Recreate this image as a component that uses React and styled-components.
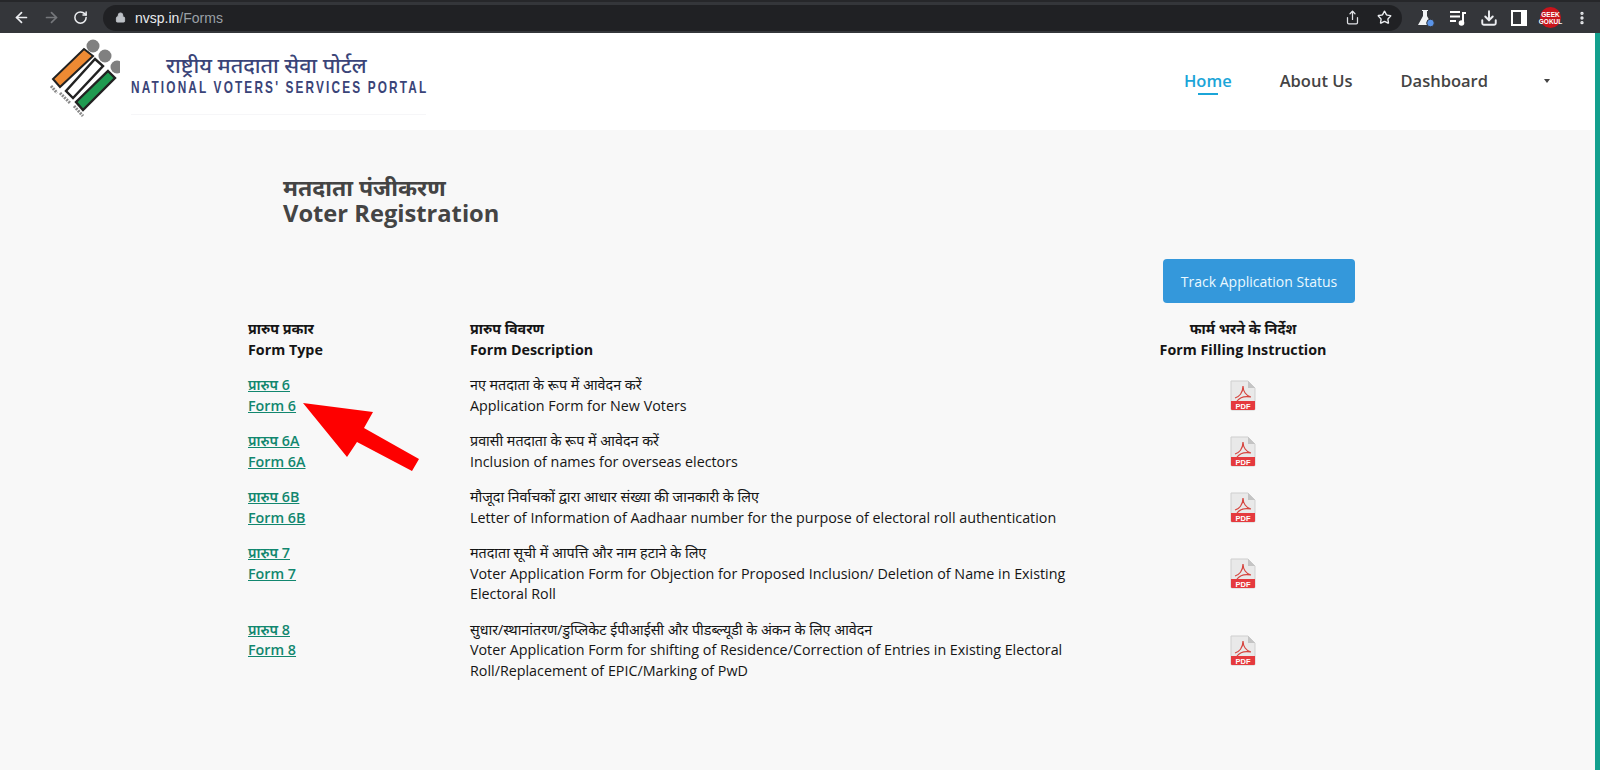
import React from 'react'
import styled, { createGlobalStyle } from 'styled-components'
import { ArrowLeft, ArrowRight, RotateCw, Lock, Share, Star, Download, MoreVertical } from 'lucide-react'

const Global = createGlobalStyle`
    html, body {
        margin: 0;
        padding: 0;
        background: #f8f8f8;
    }
    body {
        font-family: "Open Sans", "Noto Sans", sans-serif;
        color: #151515;
    }
`

const Page = styled.div`
    position: relative;
    width: 1600px;
    height: 770px;
    overflow: hidden;
    display: flex;
    flex-direction: column;
    background: #f8f8f8;
`

const Chrome = styled.div`
    height: 33px;
    flex: none;
    display: flex;
    align-items: center;
    padding: 0 13px;
    box-sizing: border-box;
    background: #34363a;
    border-top: 2px solid #26272a;
    color: #eceef1;
`

const NavIcons = styled.div`
    display: flex;
    align-items: center;
    gap: 13px;
    width: 90px;
    flex: none;
`

const UrlBar = styled.div`
    flex: none;
    width: 1299px;
    height: 26px;
    display: flex;
    align-items: center;
    gap: 9px;
    padding: 0 10px 0 12px;
    box-sizing: border-box;
    background: #202124;
    border-radius: 13px;
    font-family: "Liberation Sans", sans-serif;
    font-size: 14px;
    color: #e8eaed;
`

const UrlPath = styled.span`
    color: #9aa0a6;
`

const Spacer = styled.div`
    flex: 1;
`

const ToolIcons = styled.div`
    display: flex;
    align-items: center;
    gap: 13px;
    margin-left: 14px;
`

const Avatar = styled.div`
    width: 21px;
    height: 21px;
    border-radius: 50%;
    background: #c8141c;
    color: #fff;
    font-family: "Liberation Sans", sans-serif;
    font-size: 6.5px;
    font-weight: 700;
    line-height: 7px;
    display: flex;
    align-items: center;
    justify-content: center;
    text-align: center;
`

const Body = styled.div`
    flex: 1;
    display: flex;
    min-height: 0;
`

const Content = styled.div`
    flex: 1;
    display: flex;
    flex-direction: column;
    min-width: 0;
`

const Stripe = styled.div`
    width: 5px;
    flex: none;
    background: #13a08e;
`

const Header = styled.header`
    height: 97px;
    flex: none;
    display: flex;
    align-items: flex-start;
    background: #fff;
    padding: 0 45px 0 48px;
`

const Brand = styled.div`
    display: flex;
    align-items: flex-start;
    margin-top: 5px;
`

const BrandText = styled.div`
    width: 295px;
    margin: 13px 0 0 11px;
    padding-bottom: 17px;
    border-bottom: 1px solid #f6f6f8;
    color: #3a4478;
`

const BrandHindi = styled.div`
    padding-left: 35px;
    font-size: 21.4px;
    line-height: 28px;
    font-weight: 500;
    white-space: nowrap;
`

const BrandEnglish = styled.div`
    font-family: "Liberation Sans", sans-serif;
    font-size: 17px;
    line-height: 18px;
    font-weight: 700;
    letter-spacing: 3.1px;
    white-space: nowrap;
    transform: scaleX(0.695);
    transform-origin: left center;
`

const Nav = styled.nav`
    margin-left: auto;
    display: flex;
    align-items: center;
    gap: 48px;
    height: 97px;
    margin-top: -1px;
`

const NavItem = styled.a`
    position: relative;
    font-size: 16.5px;
    font-weight: 600;
    color: ${p => (p.$active ? '#1ba5d8' : '#444')};
    ${p =>
        p.$active &&
        `&::after {
            content: '';
            position: absolute;
            left: 14px;
            right: 14px;
            bottom: -3px;
            height: 2px;
            background: #1ba5d8;
        }`}
`

const Caret = styled.span`
    width: 0;
    height: 0;
    margin-left: 8px;
    border-left: 3.5px solid transparent;
    border-right: 3.5px solid transparent;
    border-top: 4px solid #444;
`

const Main = styled.main`
    flex: 1;
    padding: 44px 169px 0 248px;
`

const Title = styled.h1`
    margin: 0 0 0 35px;
    font-size: 23.7px;
    line-height: 26px;
    font-weight: 700;
    color: #444;
`

const TitleHindi = styled.span`
    font-size: 23px;
`

const TitleRow = styled.div`
    display: flex;
    justify-content: flex-end;
    margin-top: 33px;
    margin-bottom: 16px;
    padding-right: 71px;
`

const TrackButton = styled.button`
    width: 192px;
    height: 44px;
    border: none;
    border-radius: 4px;
    background: #3498db;
    color: #eaf8ff;
    font-family: inherit;
    font-size: 14px;
`

const Row = styled.div`
    display: grid;
    grid-template-columns: 222px 590px 366px;
    font-size: 14.3px;
    line-height: 20.5px;
    margin-bottom: 15px;
    font-weight: ${p => (p.$head ? 700 : 400)};
`

const FormLink = styled.a`
    display: block;
    width: fit-content;
    color: #12876f;
    font-weight: 600;
    text-decoration: underline;
`

const DescLine = styled.div`
    white-space: nowrap;
`

const Center = styled.div`
    display: flex;
    flex-direction: column;
    align-items: center;
    justify-content: center;
    text-align: center;
`

const Arrow = styled.svg`
    position: absolute;
    left: 300px;
    top: 400px;
`

const Flask = () => (
    <svg width="20" height="20" viewBox="0 0 20 20">
        <path d="M6 2h6v1h-1v5l5 9H2l5-9V3H6z" fill="#f1f3f4" />
        <circle cx="14.5" cy="15" r="3.8" fill="#5a94e8" stroke="#34363a" />
    </svg>
)

const MusicQueue = () => (
    <svg width="18" height="18" viewBox="0 0 18 18">
        <path d="M1 3h10M1 7.5h10M1 12h6" stroke="#fff" strokeWidth="2" fill="none" />
        <path d="M13 3h4v2h-2v9h-2z" fill="#fff" />
        <circle cx="12.5" cy="14" r="2.8" fill="#fff" />
    </svg>
)

const SidePanel = () => (
    <svg width="16" height="16" viewBox="0 0 16 16">
        <path d="M1 1h14v14H1z" fill="none" stroke="#fff" strokeWidth="2" />
        <path d="M10 1h5v14h-5z" fill="#fff" />
    </svg>
)

const PdfIcon = () => (
    <svg width="26" height="31" viewBox="0 0 26 31">
        <path d="M1 1h17l7 7v21a1 1 0 0 1-1 1H2a1 1 0 0 1-1-1z" fill="#e9e9e9" stroke="#cfcfcf" />
        <path d="M18 1v7h7z" fill="#c4c4c4" />
        <path
            d="M5 18c4-1 8-5 8-12 0 5 3 10 8 11-5-1-11 0-14 4"
            fill="none"
            stroke="#d6453f"
            strokeWidth="1.2"
        />
        <path d="M1 21h24v8a1 1 0 0 1-1 1H2a1 1 0 0 1-1-1z" fill="#e53a3e" />
        <text x="13" y="28.5" textAnchor="middle" fontSize="7.5" fontWeight="700" fill="#fff" fontFamily="Liberation Sans">
            PDF
        </text>
    </svg>
)

const Logo = () => (
    <svg width="72" height="82" viewBox="48 38 72 82">
        <circle cx="93" cy="46" r="6.5" fill="#808080" />
        <circle cx="105" cy="56" r="6.5" fill="#808080" />
        <circle cx="117" cy="67" r="6.5" fill="#808080" />
        <path d="M84 49 L93 56 L60 87 L53 79 Z" fill="#ee8a33" stroke="#222" strokeWidth="2" />
        <path d="M95 59 L103 66 L73 98 L66 91 Z" fill="#fff" stroke="#222" strokeWidth="2.4" />
        <path d="M108 71 L115 78 L83 110 L76 102 Z" fill="#1f9a50" stroke="#222" strokeWidth="2.4" />
        <path d="M51 86 L57 93 M60 93 L70 103 M74 106 L83 116" stroke="#8a8a8a" strokeWidth="3" strokeDasharray="2 1" />
    </svg>
)

const forms = [
    {
        hi: 'प्रारुप 6',
        en: 'Form 6',
        lines: ['नए मतदाता के रूप में आवेदन करें', 'Application Form for New Voters'],
    },
    {
        hi: 'प्रारुप 6A',
        en: 'Form 6A',
        lines: ['प्रवासी मतदाता के रूप में आवेदन करें', 'Inclusion of names for overseas electors'],
    },
    {
        hi: 'प्रारुप 6B',
        en: 'Form 6B',
        lines: [
            'मौजूदा निर्वाचकों द्वारा आधार संख्या की जानकारी के लिए',
            'Letter of Information of Aadhaar number for the purpose of electoral roll authentication',
        ],
    },
    {
        hi: 'प्रारुप 7',
        en: 'Form 7',
        lines: [
            'मतदाता सूची में आपत्ति और नाम हटाने के लिए',
            'Voter Application Form for Objection for Proposed Inclusion/ Deletion of Name in Existing',
            'Electoral Roll',
        ],
    },
    {
        hi: 'प्रारुप 8',
        en: 'Form 8',
        lines: [
            'सुधार/स्थानांतरण/डुप्लिकेट ईपीआईसी और पीडब्ल्यूडी के अंकन के लिए आवेदन',
            'Voter Application Form for shifting of Residence/Correction of Entries in Existing Electoral',
            'Roll/Replacement of EPIC/Marking of PwD',
        ],
    },
]

export default function App() {
    return (
        <Page>
            <Global />
            <Chrome>
                <NavIcons>
                    <ArrowLeft size={17} strokeWidth={2.4} />
                    <ArrowRight size={17} color="#75777b" strokeWidth={2.4} />
                    <RotateCw size={15} strokeWidth={2.4} />
                </NavIcons>
                <UrlBar>
                    <Lock size={11} fill="#bdc1c6" color="#bdc1c6" />
                    <span>
                        nvsp.in<UrlPath>/Forms</UrlPath>
                    </span>
                    <Spacer />
                    <Share size={15} color="#dfe1e5" />
                    <Star size={15} color="#eceef1" strokeWidth={2.2} style={{ marginLeft: 8 }} />
                </UrlBar>
                <ToolIcons>
                    <Flask />
                    <MusicQueue />
                    <Download size={18} strokeWidth={2.6} />
                    <SidePanel />
                    <Avatar>GEEK GOKUL</Avatar>
                    <MoreVertical size={16} strokeWidth={3} />
                </ToolIcons>
            </Chrome>
            <Body>
                <Content>
                    <Header>
                        <Brand>
                            <Logo />
                            <BrandText>
                                <BrandHindi>राष्ट्रीय मतदाता सेवा पोर्टल</BrandHindi>
                                <BrandEnglish>NATIONAL VOTERS' SERVICES PORTAL</BrandEnglish>
                            </BrandText>
                        </Brand>
                        <Nav>
                            <NavItem $active>Home</NavItem>
                            <NavItem>About Us</NavItem>
                            <NavItem>Dashboard</NavItem>
                            <Caret />
                        </Nav>
                    </Header>
                    <Main>
                        <Title>
                            <TitleHindi>मतदाता पंजीकरण</TitleHindi>
                            <br />
                            Voter Registration
                        </Title>
                        <TitleRow>
                            <TrackButton>Track Application Status</TrackButton>
                        </TitleRow>
                        <Row $head>
                            <div>
                                प्रारुप प्रकार
                                <br />
                                Form Type
                            </div>
                            <div>
                                प्रारुप विवरण
                                <br />
                                Form Description
                            </div>
                            <Center>
                                <span>फार्म भरने के निर्देश</span>
                                <span>Form Filling Instruction</span>
                            </Center>
                        </Row>
                        {forms.map(f => (
                            <Row key={f.en}>
                                <div>
                                    <FormLink>{f.hi}</FormLink>
                                    <FormLink>{f.en}</FormLink>
                                </div>
                                <div>
                                    {f.lines.map(l => (
                                        <DescLine key={l}>{l}</DescLine>
                                    ))}
                                </div>
                                <Center>
                                    <PdfIcon />
                                </Center>
                            </Row>
                        ))}
                    </Main>
                </Content>
                <Stripe />
            </Body>
            <Arrow width="125" height="75" viewBox="0 0 125 75">
                <path d="M3 3 L73 12 L64 28 L119 59 L112 71 L57 42 L47 57 Z" fill="#fe0000" />
            </Arrow>
        </Page>
    )
}
